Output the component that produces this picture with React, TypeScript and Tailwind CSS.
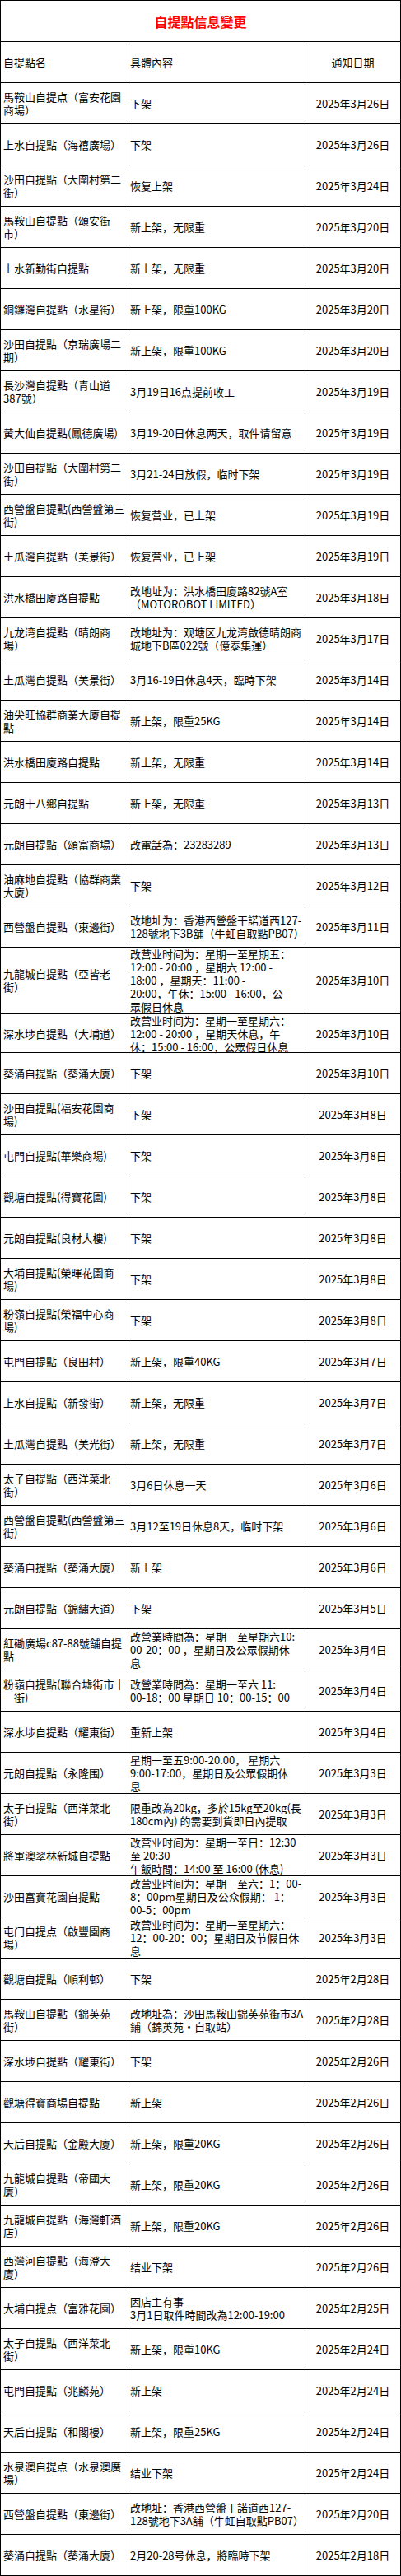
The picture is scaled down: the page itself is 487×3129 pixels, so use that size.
type Row = [name: string, content: string, date: string, h?: string];

// name / content lines are split where the source table wraps them
const rows: Row[] = [
  ["馬鞍山自提点（富安花園\n商場）", "下架", "2025年3月26日"],
  ["上水自提點（海禧廣場）", "下架", "2025年3月26日"],
  ["沙田自提點（大圍村第二\n街）", "恢复上架", "2025年3月24日"],
  ["馬鞍山自提點（頌安街\n市）", "新上架，无限重", "2025年3月20日"],
  ["上水新勤街自提點", "新上架，无限重", "2025年3月20日"],
  ["銅鑼灣自提點（水星街）", "新上架，限重100KG", "2025年3月20日"],
  ["沙田自提點（京瑞廣場二\n期）", "新上架，限重100KG", "2025年3月20日"],
  ["長沙灣自提點（青山道\n387號）", "3月19日16点提前收工", "2025年3月19日"],
  ["黃大仙自提點(鳳德廣場)", "3月19-20日休息两天，取件请留意", "2025年3月19日"],
  ["沙田自提點（大圍村第二\n街）", "3月21-24日放假，临时下架", "2025年3月19日"],
  ["西營盤自提點(西營盤第三\n街)", "恢复营业，已上架", "2025年3月19日"],
  ["土瓜灣自提點（美景街）", "恢复营业，已上架", "2025年3月19日"],
  ["洪水橋田廈路自提點", "改地址为：洪水橋田廈路82號A室\n（MOTOROBOT LIMITED）", "2025年3月18日"],
  ["九龙湾自提點（晴朗商\n場）", "改地址为：观塘区九龙湾啟德晴朗商\n城地下B區022號（億泰集運）", "2025年3月17日"],
  ["土瓜灣自提點（美景街）", "3月16-19日休息4天，臨時下架", "2025年3月14日"],
  ["油尖旺協群商業大廈自提\n點", "新上架，限重25KG", "2025年3月14日"],
  ["洪水橋田廈路自提點", "新上架，无限重", "2025年3月14日"],
  ["元朗十八鄉自提點", "新上架，无限重", "2025年3月13日"],
  ["元朗自提點（頌富商場）", "改電話為：23283289", "2025年3月13日"],
  ["油麻地自提點（協群商業\n大廈）", "下架", "2025年3月12日"],
  ["西營盤自提點（東邊街）", "改地址为：香港西營盤干諾道西127-\n128號地下3B舖（牛虹自取點PB07）", "2025年3月11日"],
  [
    "九龍城自提點（亞皆老\n街）",
    "改营业时间为：星期一至星期五：\n12:00 - 20:00 ，星期六 12:00 -\n18:00 ，星期天：11:00 -\n20:00，午休：15:00 - 16:00，公\n眾假日休息",
    "2025年3月10日",
    "h-[81px]",
  ],
  [
    "深水埗自提點（大埔道）",
    "改营业时间为：星期一至星期六：\n12:00 - 20:00 ，星期天休息，午\n休：15:00 - 16:00，公眾假日休息",
    "2025年3月10日",
    "h-[47px]",
  ],
  ["葵涌自提點（葵涌大廈）", "下架", "2025年3月10日"],
  ["沙田自提點(福安花園商\n場)", "下架", "2025年3月8日"],
  ["屯門自提點(華樂商場)", "下架", "2025年3月8日"],
  ["觀塘自提點(得寶花園)", "下架", "2025年3月8日"],
  ["元朗自提點(良材大樓)", "下架", "2025年3月8日"],
  ["大埔自提點(榮暉花園商\n場)", "下架", "2025年3月8日"],
  ["粉嶺自提點(榮福中心商\n場)", "下架", "2025年3月8日"],
  ["屯門自提點（良田村）", "新上架，限重40KG", "2025年3月7日"],
  ["上水自提點（新發街）", "新上架，无限重", "2025年3月7日"],
  ["土瓜灣自提點（美光街）", "新上架，无限重", "2025年3月7日"],
  ["太子自提點（西洋菜北\n街）", "3月6日休息一天", "2025年3月6日"],
  ["西營盤自提點(西營盤第三\n街)", "3月12至19日休息8天，临时下架", "2025年3月6日"],
  ["葵涌自提點（葵涌大廈）", "新上架", "2025年3月6日"],
  ["元朗自提點（錦繡大道）", "下架", "2025年3月5日"],
  ["紅磡廣場c87-88號舗自提\n點", "改營業時間為：星期一至星期六10:\n00-20：00 ，星期日及公眾假期休\n息", "2025年3月4日"],
  ["粉嶺自提點(聯合墟街市十\n一街)", "改營業時間為：星期一至六 11:\n00-18：00 星期日 10：00-15：00", "2025年3月4日"],
  ["深水埗自提點（耀東街）", "重新上架", "2025年3月4日"],
  ["元朗自提點（永隆围）", "星期一至五9:00-20.00， 星期六\n9:00-17:00，星期日及公眾假期休\n息", "2025年3月3日"],
  ["太子自提點（西洋菜北\n街）", "限重改為20kg，多於15kg至20kg(長\n180cm內) 的需要到貨即日內提取", "2025年3月3日"],
  ["將軍澳翠林新城自提點", "改营业时间为：星期一至日：12:30\n至 20:30\n午飯時間：14:00 至 16:00 (休息)", "2025年3月3日"],
  ["沙田富寶花園自提點", "改营业时间为：星期一至六：1：00-\n8：00pm星期日及公众假期： 1：\n00-5：00pm", "2025年3月3日"],
  ["屯门自提点（啟豐園商\n場）", "改营业时间为：星期一至星期六：\n12：00-20：00；星期日及节假日休\n息", "2025年3月3日"],
  ["觀塘自提點（順利邨）", "下架", "2025年2月28日"],
  ["馬鞍山自提點（錦英苑\n街）", "改地址為：沙田馬鞍山錦英苑街市3A\n鋪（錦英苑•自取站）", "2025年2月28日"],
  ["深水埗自提點（耀東街）", "下架", "2025年2月26日"],
  ["觀塘得寶商場自提點", "新上架", "2025年2月26日"],
  ["天后自提點（金殿大廈）", "新上架，限重20KG", "2025年2月26日"],
  ["九龍城自提點（帝國大\n廈）", "新上架，限重20KG", "2025年2月26日"],
  ["九龍城自提點（海灣軒酒\n店）", "新上架，限重20KG", "2025年2月26日"],
  ["西灣河自提點（海澄大\n廈）", "结业下架", "2025年2月26日"],
  ["大埔自提点（富雅花園）", "因店主有事\n3月1日取件時間改為12:00-19:00", "2025年2月25日"],
  ["太子自提點（西洋菜北\n街）", "新上架，限重10KG", "2025年2月24日"],
  ["屯門自提點（兆麟苑）", "新上架", "2025年2月24日"],
  ["天后自提點（和閣樓）", "新上架，限重25KG", "2025年2月24日"],
  ["水泉澳自提点（水泉澳廣\n場）", "结业下架", "2025年2月24日"],
  ["西營盤自提點（東邊街）", "改地址：香港西營盤干諾道西127-\n128號地下3A舖（牛虹自取點PB07）", "2025年2月20日"],
  ["葵涌自提點（葵涌大廈）", "2月20-28号休息，將臨時下架", "2025年2月18日"],
];

function TableRow({ name, content, date, h = "h-[50px]" }: {
  name: string;
  content: string;
  date: string;
  h?: string;
}) {
  return (
    <div className={`grid grid-cols-[155px_215px_116px] border-b border-black ${h}`}>
      <div className="flex items-center whitespace-pre border-r border-black pl-[3px]">
        {name}
      </div>
      <div className="flex items-center whitespace-pre border-r border-black pl-[2px]">
        {content}
      </div>
      <div className="flex items-center justify-center whitespace-pre border-r border-black">
        {date}
      </div>
    </div>
  );
}

export default function App() {
  return (
    <div className="min-h-screen bg-white">
      <div className="w-[487px] border-l border-t border-black bg-white font-['Noto_Sans_CJK_SC','Noto_Sans_CJK_TC',sans-serif] text-[13px] leading-4 text-black">
        <div className="flex h-[50px] items-center justify-center border-b border-r border-black text-[16px] font-bold text-[#ff0000]">
          自提點信息變更
        </div>
        <TableRow name="自提點名" content="具體內容" date="通知日期" />
        {rows.map(([name, content, date, h], i) => (
          <TableRow key={i} name={name} content={content} date={date} h={h} />
        ))}
      </div>
    </div>
  );
}
